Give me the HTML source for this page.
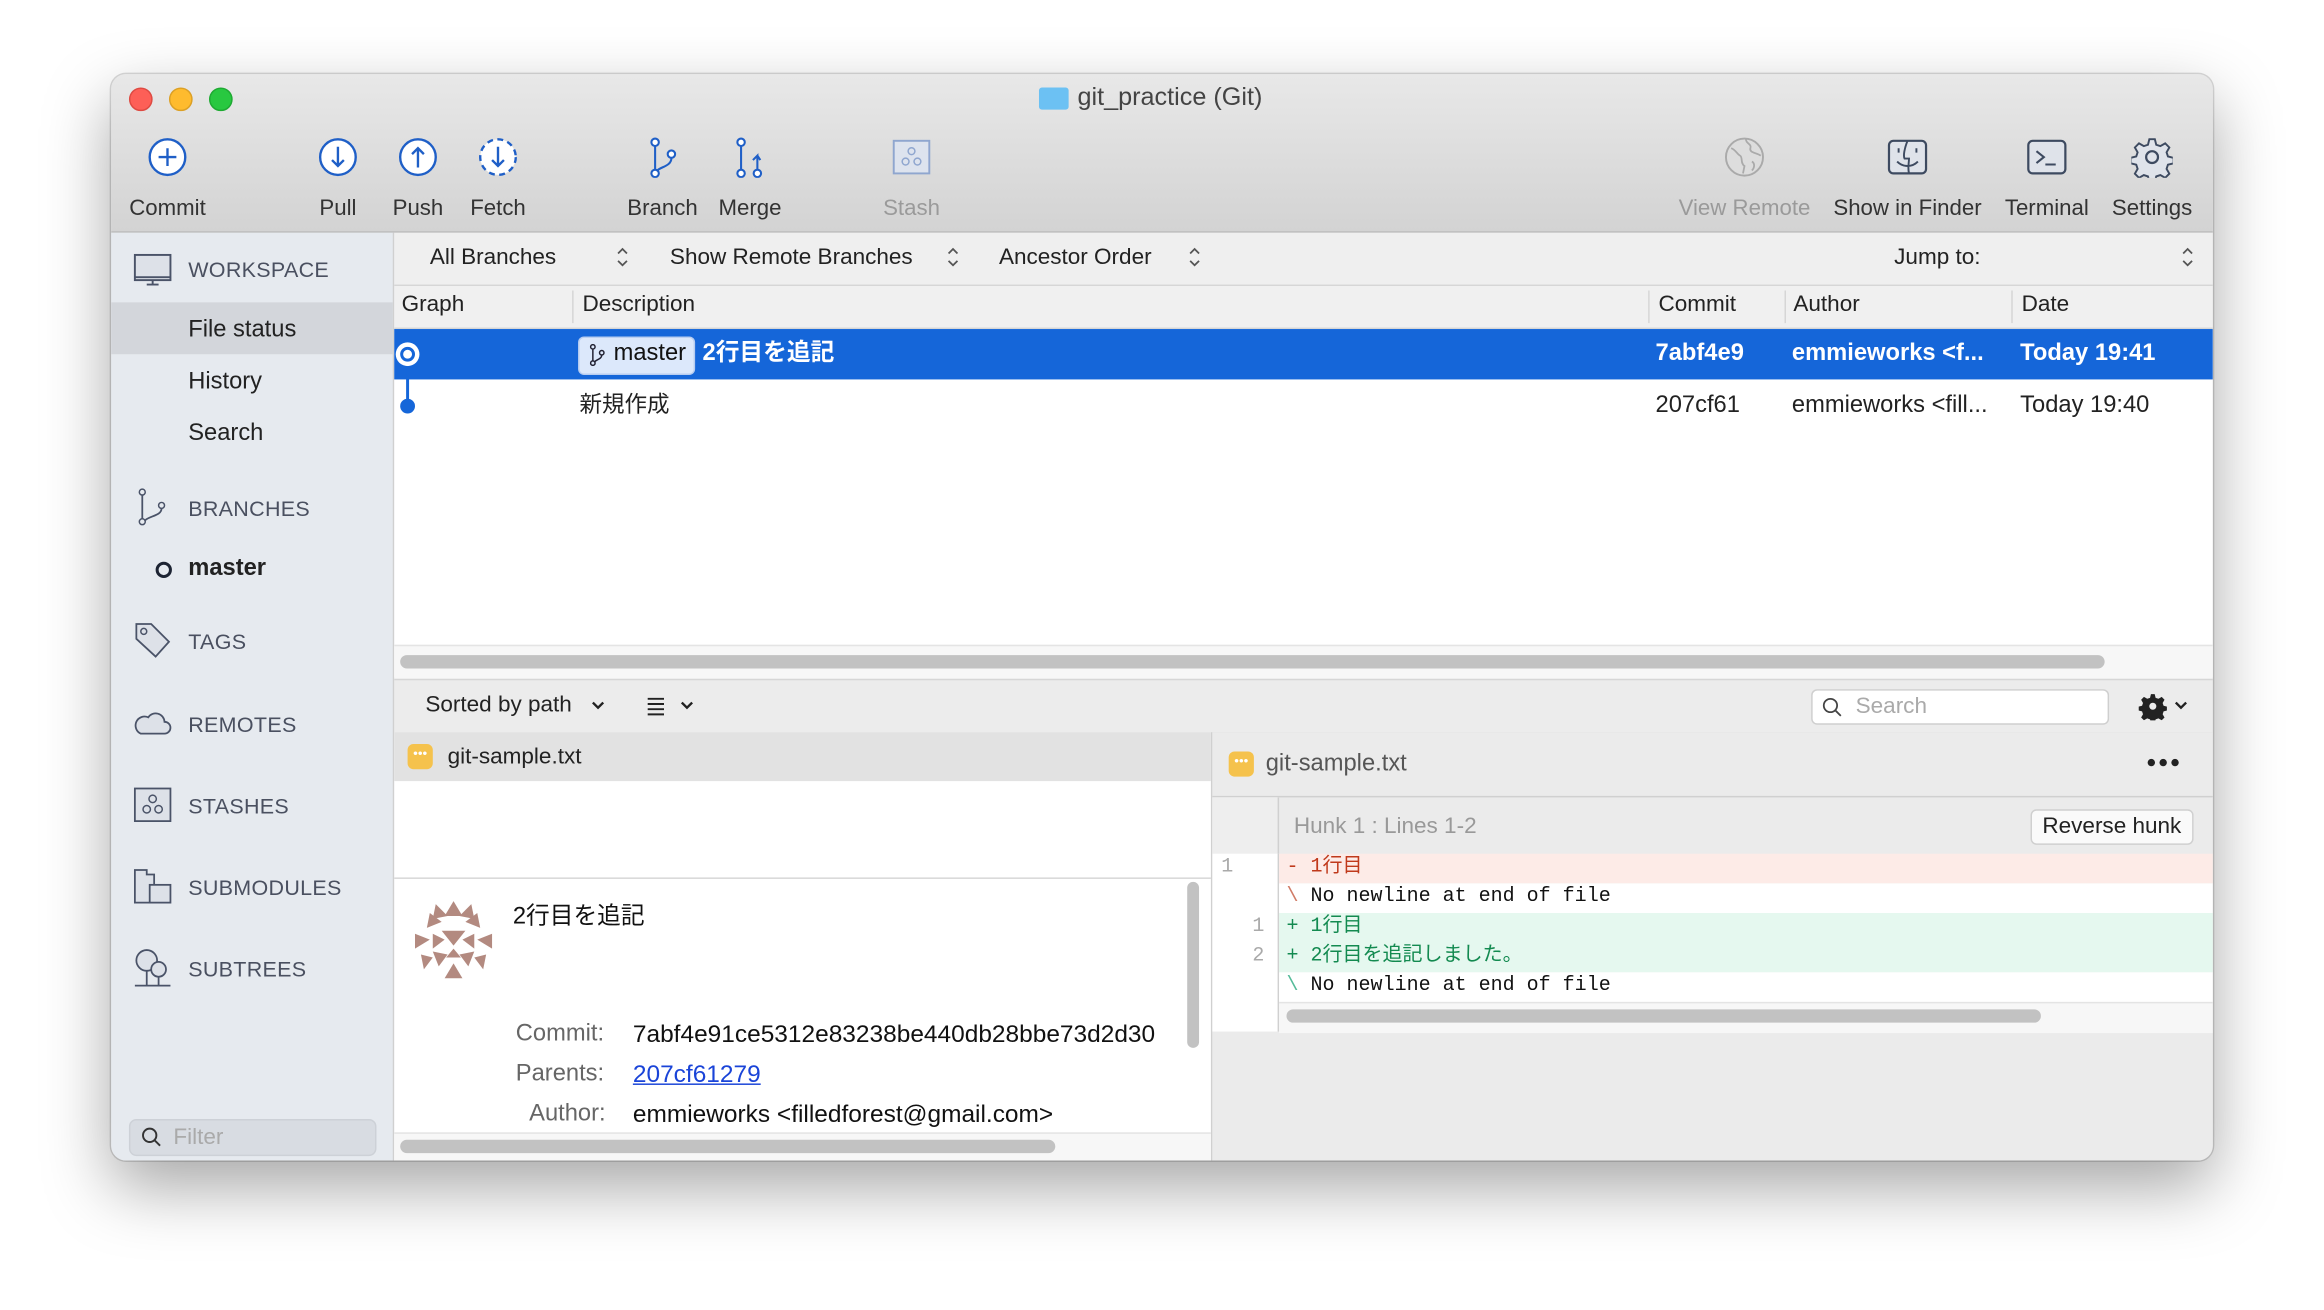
<!DOCTYPE html>
<html><head><meta charset="utf-8">
<style>
html,body{margin:0;padding:0;width:2324px;height:1310px;overflow:hidden;background:#fff;}
#s{position:absolute;left:0;top:0;width:1568px;height:884px;transform:scale(1.48214);transform-origin:0 0;font-family:"Liberation Sans","Noto Sans CJK JP",sans-serif;color:#222;}
.a{position:absolute;}
.t{position:absolute;white-space:nowrap;font-size:15.2px;line-height:18px;}
.win{left:75px;top:50px;width:1418px;height:733px;border-radius:10px;overflow:hidden;background:#ececec;box-shadow:0 18px 45px rgba(0,0,0,.35),0 0 0 1px rgba(0,0,0,.15);}
.tb{left:0;top:0;width:1418px;height:106px;background:linear-gradient(#e8e8e8,#d3d3d3);border-bottom:1px solid #b9b9b9;}
.lab{position:absolute;font-size:15px;color:#333;transform:translateX(-50%);white-space:nowrap;top:82px;}
.ic{position:absolute;top:42px;width:28px;height:28px;transform:translateX(-50%);}
.side{left:0;top:107px;width:190px;height:626px;background:#e6eaef;border-right:1px solid #d0d0d0;}
.sh{position:absolute;left:52px;font-size:14.5px;color:#4a5060;letter-spacing:.2px;}
.si{position:absolute;left:15px;width:26px;height:26px;}
.mono{font-family:"Liberation Mono","Noto Sans CJK JP",monospace;font-size:13.5px;}
.ud{position:absolute;width:8px;height:15px;}
</style></head><body>
<div id="s">
<div class="a win">
 <div class="a tb">
  <div class="a" style="left:12px;top:9px;width:14px;height:14px;border-radius:50%;background:#fd5f57;border:.5px solid #de4a42"></div>
  <div class="a" style="left:39px;top:9px;width:14px;height:14px;border-radius:50%;background:#febb2e;border:.5px solid #dca025"></div>
  <div class="a" style="left:66px;top:9px;width:14px;height:14px;border-radius:50%;background:#28c840;border:.5px solid #1eaa32"></div>
  <div class="a" style="left:626px;top:9px;width:20px;height:15px;background:#6cc1f3;border-radius:2px"></div>
  <div class="t" style="left:652px;top:7px;font-size:17px;color:#444">git_practice (Git)</div>
  <svg class="ic" style="left:38px" viewBox="0 0 28 28"><circle cx="14" cy="14" r="12" fill="#fff" stroke="#1f5fc7" stroke-width="1.6"/><path d="M14 8v12M8 14h12" stroke="#1f5fc7" stroke-width="1.6"/></svg>
  <svg class="ic" style="left:153px" viewBox="0 0 28 28"><circle cx="14" cy="14" r="12" fill="#fff" stroke="#1f5fc7" stroke-width="1.6"/><path d="M14 7v13M10 16l4 4 4-4" fill="none" stroke="#1f5fc7" stroke-width="1.6"/></svg>
  <svg class="ic" style="left:207px" viewBox="0 0 28 28"><circle cx="14" cy="14" r="12" fill="#fff" stroke="#1f5fc7" stroke-width="1.6"/><path d="M14 21V8M10 12l4-4 4 4" fill="none" stroke="#1f5fc7" stroke-width="1.6"/></svg>
  <svg class="ic" style="left:261px" viewBox="0 0 28 28"><circle cx="14" cy="14" r="12" fill="#fff" stroke="#1f5fc7" stroke-width="1.6" stroke-dasharray="4 3"/><path d="M14 7v13M10 16l4 4 4-4" fill="none" stroke="#1f5fc7" stroke-width="1.6"/></svg>
  <svg class="ic" style="left:372px" viewBox="0 0 28 28"><circle cx="9" cy="4" r="2.5" fill="#fff" stroke="#1f5fc7" stroke-width="1.4"/><circle cx="9" cy="25" r="2.5" fill="#fff" stroke="#1f5fc7" stroke-width="1.4"/><circle cx="20" cy="12" r="2.5" fill="#fff" stroke="#1f5fc7" stroke-width="1.4"/><path d="M9 6.5v16M20 14.5c0 6-8 6-10 9" fill="none" stroke="#1f5fc7" stroke-width="1.4"/></svg>
  <svg class="ic" style="left:431px" viewBox="0 0 28 28"><circle cx="8" cy="4" r="2.5" fill="#fff" stroke="#1f5fc7" stroke-width="1.4"/><circle cx="8" cy="25" r="2.5" fill="#fff" stroke="#1f5fc7" stroke-width="1.4"/><circle cx="19" cy="25" r="2.5" fill="#fff" stroke="#1f5fc7" stroke-width="1.4"/><path d="M8 6.5v16M19 22.5V13l-3 3M19 13l2 3" fill="none" stroke="#1f5fc7" stroke-width="1.4"/></svg>
  <svg class="ic" style="left:540px" viewBox="0 0 28 28"><rect x="2" y="3" width="24" height="22" fill="#dde3ee" stroke="#8fa6cf" stroke-width="1.3"/><circle cx="14" cy="10" r="2.3" fill="none" stroke="#8fa6cf"/><circle cx="10" cy="17" r="2.3" fill="none" stroke="#8fa6cf"/><circle cx="18" cy="17" r="2.3" fill="none" stroke="#8fa6cf"/></svg>
  <svg class="ic" style="left:1102px" viewBox="0 0 28 28"><circle cx="14" cy="14" r="12.5" fill="#ddd" stroke="#aaa" stroke-width="1.3"/><path d="M5 8c3 1 4 4 6 5s0 5 3 7l-1 5M15 2c0 3 4 3 3 6s4 3 7 5M19 17c2 1 2 4 0 6" fill="none" stroke="#aaa" stroke-width="1.2"/></svg>
  <svg class="ic" style="left:1212px" viewBox="0 0 28 28"><rect x="1.5" y="3" width="25" height="22" rx="3" fill="#dfe3ea" stroke="#3d4a60" stroke-width="1.5"/><path d="M14 3c-2 5-3 10-2 12h3c0 3-1 6 0 10M8 8v3M20 8v3M7 17c4 4 10 4 14 0" fill="none" stroke="#3d4a60" stroke-width="1.3"/></svg>
  <svg class="ic" style="left:1306px" viewBox="0 0 28 28"><rect x="1.5" y="3" width="25" height="22" rx="3" fill="#dfe3ea" stroke="#3d4a60" stroke-width="1.5"/><path d="M7 10l5 4-5 4M13 19h7" fill="none" stroke="#3d4a60" stroke-width="1.4"/></svg>
  <svg class="ic" style="left:1377px" viewBox="0 0 28 28"><path d="M12 1h4l1 4 3 1 3.5-2 3 3-2 3.5 1 3 4 1v4l-4 1-1 3 2 3.5-3 3-3.5-2-3 1-1 4h-4l-1-4-3-1-3.5 2-3-3 2-3.5-1-3-4-1v-4l4-1 1-3-2-3.5 3-3L8 6l3-1z" transform="translate(1 1) scale(.93)" fill="#dfe3ea" stroke="#3d4a60" stroke-width="1.4"/><circle cx="14" cy="14" r="4" fill="none" stroke="#3d4a60" stroke-width="1.5"/></svg>
  <div class="lab" style="left:38px">Commit</div>
  <div class="lab" style="left:153px">Pull</div>
  <div class="lab" style="left:207px">Push</div>
  <div class="lab" style="left:261px">Fetch</div>
  <div class="lab" style="left:372px">Branch</div>
  <div class="lab" style="left:431px">Merge</div>
  <div class="lab" style="left:540px;color:#9a9a9a">Stash</div>
  <div class="lab" style="left:1102px;color:#9a9a9a">View Remote</div>
  <div class="lab" style="left:1212px">Show in Finder</div>
  <div class="lab" style="left:1306px">Terminal</div>
  <div class="lab" style="left:1377px">Settings</div>
 </div>
 <!-- sidebar -->
 <div class="a side">
  <svg class="si" style="top:13px" viewBox="0 0 26 26"><rect x="1" y="2" width="24" height="17" fill="#dde1e8" stroke="#4a5368" stroke-width="1.3"/><path d="M1 17h24M9 22h8M13 19v3" stroke="#4a5368" stroke-width="1.3"/></svg>
  <div class="sh" style="top:18px">WORKSPACE</div>
  <div class="a" style="left:0;top:47px;width:190px;height:35px;background:#d3d6db"></div>
  <div class="t" style="left:52px;top:57px;font-size:16px">File status</div>
  <div class="t" style="left:52px;top:92px;font-size:16px">History</div>
  <div class="t" style="left:52px;top:127px;font-size:16px">Search</div>
  <svg class="si" style="top:172px" viewBox="0 0 26 26"><circle cx="6" cy="3" r="2" fill="none" stroke="#4a5368"/><circle cx="6" cy="23" r="2" fill="none" stroke="#4a5368"/><circle cx="19" cy="12" r="2" fill="none" stroke="#4a5368"/><path d="M6 5v16M19 14c0 5-8 5-11 8" fill="none" stroke="#4a5368" stroke-width="1.2"/></svg>
  <div class="sh" style="top:179px">BRANCHES</div>
  <div class="a" style="left:30px;top:222px;width:7px;height:7px;border:2.5px solid #1d2433;border-radius:50%"></div>
  <div class="t" style="left:52px;top:218px;font-size:16px;font-weight:bold">master</div>
  <svg class="si" style="top:262px" viewBox="0 0 26 26"><path d="M2 2h10l12 12-9 10L2 12z" fill="#dde1e8" stroke="#4a5368" stroke-width="1.2"/><circle cx="7" cy="7" r="2" fill="none" stroke="#4a5368"/></svg>
  <div class="sh" style="top:269px">TAGS</div>
  <svg class="si" style="top:318px" viewBox="0 0 26 26"><path d="M5 20h16a4 4 0 0 0 0-8 6 6 0 0 0-11-3 5 5 0 0 0-5 11z" fill="#dde1e8" stroke="#4a5368" stroke-width="1.2"/></svg>
  <div class="sh" style="top:325px">REMOTES</div>
  <svg class="si" style="top:373px" viewBox="0 0 26 26"><rect x="1" y="2" width="24" height="22" fill="#dde1e8" stroke="#4a5368" stroke-width="1.2"/><circle cx="13" cy="9" r="2.5" fill="none" stroke="#4a5368"/><circle cx="9" cy="16" r="2.5" fill="none" stroke="#4a5368"/><circle cx="17" cy="16" r="2.5" fill="none" stroke="#4a5368"/></svg>
  <div class="sh" style="top:380px">STASHES</div>
  <svg class="si" style="top:428px" viewBox="0 0 26 26"><path d="M1 2h8v3h5v19H1z" fill="#dde1e8" stroke="#4a5368" stroke-width="1.2"/><rect x="11" y="12" width="14" height="12" fill="#dde1e8" stroke="#4a5368" stroke-width="1.2"/></svg>
  <div class="sh" style="top:435px">SUBMODULES</div>
  <svg class="si" style="top:483px" viewBox="0 0 26 26"><circle cx="9" cy="8" r="7" fill="#dde1e8" stroke="#4a5368" stroke-width="1.2"/><circle cx="17" cy="14" r="5" fill="#dde1e8" stroke="#4a5368" stroke-width="1.2"/><path d="M9 15v10M17 19v6M1 25h24" stroke="#4a5368" stroke-width="1.2"/></svg>
  <div class="sh" style="top:490px">SUBTREES</div>
  <div class="a" style="left:12px;top:598px;width:165px;height:23px;background:#d8dce2;border-radius:5px;border:1px solid #cdd1d7"></div>
  <svg class="a" style="left:20px;top:603px" width="14" height="14" viewBox="0 0 14 14"><circle cx="6" cy="6" r="4.5" fill="none" stroke="#333" stroke-width="1.3"/><path d="M9.5 9.5l3.5 3.5" stroke="#333" stroke-width="1.3"/></svg>
  <div class="t" style="left:42px;top:602px;color:#aaa">Filter</div>
 </div>
 <!-- filter bar -->
 <div class="a" style="left:191px;top:107px;width:1227px;height:35px;background:#efefef;border-bottom:1px solid #d6d6d6">
  <div class="t" style="left:24px;top:8px">All Branches</div>
  <svg class="ud" style="left:150px;top:9px" viewBox="0 0 8 15"><path d="M1 5l3-3 3 3M1 10l3 3 3-3" fill="none" stroke="#555" stroke-width="1.2"/></svg>
  <div class="t" style="left:186px;top:8px">Show Remote Branches</div>
  <svg class="ud" style="left:373px;top:9px" viewBox="0 0 8 15"><path d="M1 5l3-3 3 3M1 10l3 3 3-3" fill="none" stroke="#555" stroke-width="1.2"/></svg>
  <div class="t" style="left:408px;top:8px">Ancestor Order</div>
  <svg class="ud" style="left:536px;top:9px" viewBox="0 0 8 15"><path d="M1 5l3-3 3 3M1 10l3 3 3-3" fill="none" stroke="#555" stroke-width="1.2"/></svg>
  <div class="t" style="left:1012px;top:8px">Jump to:</div>
  <svg class="ud" style="left:1206px;top:9px" viewBox="0 0 8 15"><path d="M1 5l3-3 3 3M1 10l3 3 3-3" fill="none" stroke="#555" stroke-width="1.2"/></svg>
 </div>
 <!-- header -->
 <div class="a" style="left:191px;top:143px;width:1227px;height:28px;background:#f0f0f0;border-bottom:1px solid #d6d6d6">
  <div class="t" style="left:5px;top:4px">Graph</div>
  <div class="a" style="left:120px;top:3px;width:1px;height:22px;background:#d6d6d6"></div>
  <div class="t" style="left:127px;top:4px">Description</div>
  <div class="a" style="left:846px;top:3px;width:1px;height:22px;background:#d6d6d6"></div>
  <div class="t" style="left:853px;top:4px">Commit</div>
  <div class="a" style="left:938px;top:3px;width:1px;height:22px;background:#d6d6d6"></div>
  <div class="t" style="left:944px;top:4px">Author</div>
  <div class="a" style="left:1091px;top:3px;width:1px;height:22px;background:#d6d6d6"></div>
  <div class="t" style="left:1098px;top:4px">Date</div>
 </div>
 <!-- rows -->
 <div class="a" style="left:191px;top:172px;width:1227px;height:235px;background:#fff">
  <div class="a" style="left:0;top:0;width:1227px;height:34px;background:#1566d9"></div>
  <div class="a" style="left:1px;top:9px;width:16px;height:16px;border-radius:50%;background:#fff"></div>
  <div class="a" style="left:4px;top:12px;width:10px;height:10px;border-radius:50%;border:2px solid #1566d9;box-sizing:border-box"></div>
  <div class="a" style="left:8px;top:25px;width:2px;height:25px;background:#1566d9"></div>
  <div class="a" style="left:4px;top:47px;width:10px;height:10px;border-radius:50%;background:#1566d9"></div>
  <div class="a" style="left:124px;top:5px;width:77px;height:24px;background:#dce8fb;border-radius:4px;border:1px solid #b8cdf0"></div>
  <svg class="a" style="left:131px;top:10px" width="12" height="15" viewBox="0 0 12 15"><circle cx="3" cy="2" r="1.5" fill="none" stroke="#223"/><circle cx="3" cy="13" r="1.5" fill="none" stroke="#223"/><circle cx="9" cy="6" r="1.5" fill="none" stroke="#223"/><path d="M3 3.5v8M9 7.5c0 3-4 3-5 5" fill="none" stroke="#223"/></svg>
  <div class="t" style="left:148px;top:8px;font-size:16px;color:#111">master</div>
  <div class="t" style="left:208px;top:8px;font-size:16px;color:#fff;font-weight:bold">2行目を追記</div>
  <div class="t" style="left:851px;top:8px;font-size:16px;color:#fff;font-weight:bold">7abf4e9</div>
  <div class="t" style="left:943px;top:8px;font-size:16px;color:#fff;font-weight:bold">emmieworks &lt;f...</div>
  <div class="t" style="left:1097px;top:8px;font-size:16px;color:#fff;font-weight:bold">Today 19:41</div>
  <div class="t" style="left:125px;top:43px">新規作成</div>
  <div class="t" style="left:851px;top:43px;font-size:16px">207cf61</div>
  <div class="t" style="left:943px;top:43px;font-size:16px">emmieworks &lt;fill...</div>
  <div class="t" style="left:1097px;top:43px;font-size:16px">Today 19:40</div>
  <div class="a" style="left:0;top:213px;width:1227px;height:22px;background:#f7f7f7;border-top:1px solid #e4e4e4"></div>
  <div class="a" style="left:4px;top:220px;width:1150px;height:9px;background:#c2c2c2;border-radius:5px"></div>
 </div>
 <!-- bottom toolbar -->
 <div class="a" style="left:191px;top:408px;width:1227px;height:35px;background:#ececec;border-top:1px solid #d6d6d6;border-bottom:1px solid #d6d6d6">
  <div class="t" style="left:21px;top:8px">Sorted by path</div>
  <svg class="a" style="left:133px;top:14px" width="9" height="6" viewBox="0 0 9 6"><path d="M1 1l3.5 3.5L8 1" fill="none" stroke="#222" stroke-width="1.6"/></svg>
  <svg class="a" style="left:170px;top:11px" width="13" height="13" viewBox="0 0 13 13"><path d="M1 1.5h11M1 5h11M1 8.5h11M1 12h11" stroke="#222" stroke-width="1.3"/></svg>
  <svg class="a" style="left:193px;top:14px" width="9" height="6" viewBox="0 0 9 6"><path d="M1 1l3.5 3.5L8 1" fill="none" stroke="#222" stroke-width="1.6"/></svg>
  <div class="a" style="left:956px;top:6px;width:199px;height:22px;background:#fff;border:1px solid #cfcfcf;border-radius:4px"></div>
  <svg class="a" style="left:963px;top:11px" width="14" height="14" viewBox="0 0 14 14"><circle cx="6" cy="6" r="4.5" fill="none" stroke="#444" stroke-width="1.2"/><path d="M9.5 9.5l3.5 3.5" stroke="#444" stroke-width="1.2"/></svg>
  <div class="t" style="left:986px;top:9px;color:#aaa">Search</div>
  <svg class="a" style="left:1177px;top:8px" width="19" height="19" viewBox="0 0 28 28"><path d="M12 1h4l1 4 3 1 3.5-2 3 3-2 3.5 1 3 4 1v4l-4 1-1 3 2 3.5-3 3-3.5-2-3 1-1 4h-4l-1-4-3-1-3.5 2-3-3 2-3.5-1-3-4-1v-4l4-1 1-3-2-3.5 3-3L8 6l3-1z" transform="translate(1 1) scale(.93)" fill="#222"/><circle cx="14" cy="14" r="3.5" fill="#ececec"/></svg>
  <svg class="a" style="left:1201px;top:14px" width="9" height="6" viewBox="0 0 9 6"><path d="M1 1l3.5 3.5L8 1" fill="none" stroke="#222" stroke-width="1.6"/></svg>
 </div>
 <!-- left file pane -->
 <div class="a" style="left:191px;top:444px;width:551px;height:289px;background:#fff;border-right:1px solid #d0d0d0">
  <div class="a" style="left:0;top:0;width:551px;height:33px;background:#e2e2e2"></div>
  <div class="a" style="left:9px;top:8px;width:17px;height:17px;background:#f5c24c;border-radius:4px;color:#fff;font-size:9px;text-align:center;line-height:13px">•••</div>
  <div class="t" style="left:36px;top:8px">git-sample.txt</div>
  <div class="a" style="left:0;top:98px;width:551px;height:1px;background:#d6d6d6"></div>
  <svg class="a" style="left:12px;top:112px" width="56" height="56" viewBox="0 0 56 56"><g fill="#b38a80"><path d="M28 2l6 10h-12z"/><path d="M16 4l8 8-10 2z"/><path d="M40 4l2 10-10-2z"/><path d="M12 10l8 6-10 4z"/><path d="M44 10l2 10-10-4z"/><path d="M2 24l10 4-10 6z"/><path d="M54 24v10l-10-6z"/><path d="M20 22h16l-8 10z"/><path d="M14 36l10 2-6 8z"/><path d="M42 36l-4 10-6-8z"/><path d="M28 44l6 10h-12z"/><path d="M22 28l-8 6v-10z"/><path d="M34 28l8 6v-10z"/><path d="M6 38l8 2-6 8z"/><path d="M50 38l-2 10-6-8z"/><path d="M28 34l5 6h-10z"/></g></svg>
  <div class="t" style="left:80px;top:116px;font-size:16px;color:#111">2行目を追記</div>
  <div class="t" style="left:82px;top:195px;font-size:16px;color:#666">Commit:</div>
  <div class="t" style="left:161px;top:195px;font-size:16.5px;color:#111;width:370px;overflow:hidden">7abf4e91ce5312e83238be440db28bbe73d2d30</div>
  <div class="t" style="left:82px;top:222px;font-size:16px;color:#666">Parents:</div>
  <div class="t" style="left:161px;top:222px;font-size:16.5px;color:#1a44d8;text-decoration:underline">207cf61279</div>
  <div class="t" style="left:91px;top:249px;font-size:16px;color:#666">Author:</div>
  <div class="t" style="left:161px;top:249px;font-size:16.5px;color:#111">emmieworks &lt;filledforest@gmail.com&gt;</div>
  <div class="a" style="left:535px;top:101px;width:8px;height:112px;background:#c2c2c2;border-radius:4px"></div>
  <div class="a" style="left:0;top:270px;width:551px;height:19px;background:#f7f7f7;border-top:1px solid #e4e4e4"></div>
  <div class="a" style="left:4px;top:275px;width:442px;height:9px;background:#c2c2c2;border-radius:5px"></div>
 </div>
 <!-- right diff pane -->
 <div class="a" style="left:743px;top:444px;width:675px;height:289px;background:#ebebeb">
  <div class="a" style="left:11px;top:13px;width:17px;height:17px;background:#f5c24c;border-radius:4px;color:#fff;font-size:9px;text-align:center;line-height:13px">•••</div>
  <div class="t" style="left:36px;top:13px;font-size:16px;color:#555">git-sample.txt</div>
  <div class="a" style="left:631px;top:18px;width:5px;height:5px;border-radius:50%;background:#222;box-shadow:8px 0 #222,16px 0 #222"></div>
  <div class="a" style="left:0;top:43px;width:675px;height:1px;background:#d0d0d0"></div>
  <div class="a" style="left:0;top:44px;width:44px;height:158px;background:#fff;border-right:1px solid #d0d0d0"></div>
  <div class="a" style="left:0;top:44px;width:44px;height:38px;background:#eee;border-right:1px solid #d0d0d0"></div>
  <div class="t" style="left:55px;top:55px;color:#999">Hunk 1 : Lines 1-2</div>
  <div class="a" style="left:552px;top:52px;width:108px;height:22px;background:#fafafa;border:1px solid #d0d0d0;border-radius:4px"></div>
  <div class="t" style="left:560px;top:55px;color:#222">Reverse hunk</div>
  <div class="a" style="left:45px;top:82px;width:630px;height:20px;background:#fdebe7"></div>
  <div class="a" style="left:45px;top:102px;width:630px;height:20px;background:#fff"></div>
  <div class="a" style="left:45px;top:122px;width:630px;height:40px;background:#e5f8ef"></div>
  <div class="a" style="left:45px;top:162px;width:630px;height:20px;background:#fff"></div>
  <div class="a" style="left:45px;top:182px;width:630px;height:20px;background:#f7f7f7;border-top:1px solid #e4e4e4"></div>
  <div class="a" style="left:50px;top:187px;width:509px;height:9px;background:#c2c2c2;border-radius:5px"></div>
  <div class="t mono" style="left:6px;top:83px;color:#aaa">1</div>
  <div class="t mono" style="left:27px;top:123px;color:#aaa">1</div>
  <div class="t mono" style="left:27px;top:143px;color:#aaa">2</div>
  <div class="t mono" style="left:50px;top:83px;color:#c0391b">- 1行目</div>
  <div class="t mono" style="left:50px;top:103px;color:#111"><span style="color:#d07b66">\</span>  No newline at end of file</div>
  <div class="t mono" style="left:50px;top:123px;color:#138a50">+ 1行目</div>
  <div class="t mono" style="left:50px;top:143px;color:#138a50">+ 2行目を追記しました。</div>
  <div class="t mono" style="left:50px;top:163px;color:#111"><span style="color:#5b9">\</span>  No newline at end of file</div>
 </div>
</div>
</div>
</body></html>
